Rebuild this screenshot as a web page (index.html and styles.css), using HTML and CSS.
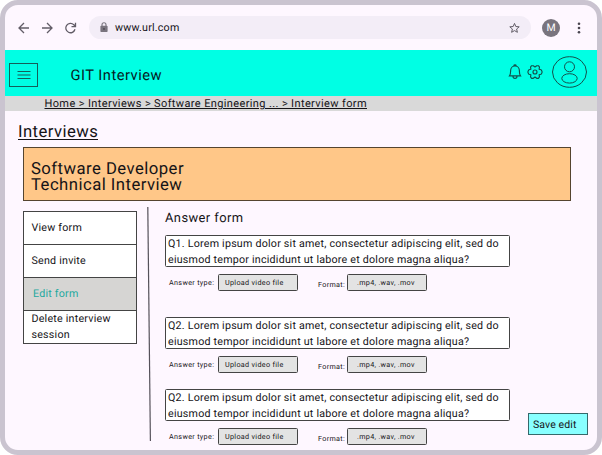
FILE: index.html
```html
<!DOCTYPE html>
<html lang="en">
<head>
<meta charset="utf-8">
<title>GIT Interview</title>
<link rel="stylesheet" href="styles.css">
</head>
<body>
<div class="window">
  <div class="toolbar">
    <svg class="nav" width="60" height="14" viewBox="0 0 60 14" fill="none" stroke="#625d67" stroke-width="1.3">
      <path d="M11 7H1.2M6 2L1 7l5 5"/>
      <path d="M24 7h9.8M29 2l5 5-5 5"/>
      <path d="M57 8.300A4.700 4.700 0 1 1 55.8 3.700L57.300 5.200M57.500 1.700v4h-4"/>
    </svg>
    <div class="address">
      <svg width="8" height="11" viewBox="0 0 8 11"><path d="M2 4V2.8a2 2 0 0 1 4 0V4" fill="none" stroke="#79747e" stroke-width="1.1"/><rect x=".4" y="3.8" width="7.2" height="6.2" rx=".8" fill="#79747e"/><circle cx="4" cy="6.9" r=".9" fill="#49454f"/></svg>
      <span class="url">www.url.com</span>
      <svg width="12" height="12" viewBox="0 0 12 12" fill="none" stroke="#625d67" stroke-width="1"><path d="M6.500 1.400l1.300 3.100 3.400.3-2.600 2.200.8 3.300-2.900-1.700-2.900 1.700.8-3.300-2.600-2.200 3.400-.3z"/></svg>
    </div>
    <div class="avatar">M</div>
    <svg class="dots" width="4" height="12" viewBox="0 0 4 12" fill="#49454f"><circle cx="2" cy="1.8" r="1.3"/><circle cx="2" cy="6" r="1.3"/><circle cx="2" cy="10.2" r="1.3"/></svg>
  </div>
  <header class="header">
    <div class="menu"><svg width="14" height="10" viewBox="0 0 14 10" stroke="#145f59" stroke-width="1.2"><path d="M.5 1.5h13M.5 5h13M.5 8.5h13"/></svg></div>
    <div class="brand">GIT Interview</div>
    <svg class="bell" width="14" height="16" viewBox="0 0 14 16" fill="none" stroke="#14504b" stroke-width="1.15"><path d="M1.500 11.800C2.700 10.200 2.600 9 2.600 6.800A4.400 5 0 0 1 11.400 6.800c0 2.200-.1 3.400 1.100 5zM5 12.200a2 2.100 0 0 0 4 0M5.900 1.800a1.100.9 0 0 1 2.200 0"/></svg>
    <svg class="gear" width="16" height="16" viewBox="0 0 16 16" fill="none" stroke="#14504b" stroke-width="1.15" stroke-linejoin="round"><path d="M4.600 1.700h1.700L8 3l1.700-1.300h1.700l1.100 1.500-.4 2 2 .6.900 1.500v1.400l-.9 1.500-2 .6.4 2-1.100 1.500H9.700L8 13l-1.700 1.300H4.600l-1.100-1.500.4-2-2-.6L1 8.700V7.300l.9-1.500 2-.6-.4-2z"/><circle cx="8" cy="8" r="2"/></svg>
    <svg class="profile" width="36" height="32" viewBox="0 0 36 32" fill="none" stroke="#14504b" stroke-width="1"><ellipse cx="17.500" cy="16" rx="17" ry="15.300"/><circle cx="17.500" cy="10.800" r="5"/><ellipse cx="17.500" cy="22.400" rx="7.700" ry="4.700"/></svg>
  </header>
  <nav class="crumbs"><span class="ul">Home &gt; Interviews &gt; Software Engineering ... &gt; Interview form</span></nav>
  <main>
    <h1 class="title"><span>Interviews</span></h1>
    <section class="banner">Software Developer<br>Technical Interview</section>
    <div class="columns">
      <ul class="side">
        <li>View form</li>
        <li>Send invite</li>
        <li class="active">Edit form</li>
        <li>Delete interview<br>session</li>
      </ul>
      <svg class="rule" width="5" height="234" viewBox="0 0 5 234"><path d="M.8 0L3.400 234" stroke="#55515a" stroke-width="1.200"/></svg>
      <section class="form">
        <h2>Answer form</h2>
        <div class="item first">
          <p>Q1. Lorem ipsum dolor sit amet, consectetur adipiscing elit, sed do<br>eiusmod tempor incididunt ut labore et dolore magna aliqua?</p>
          <div class="opts"><span class="label">Answer type:</span><span class="box">Upload video file</span><span class="label fmt">Format:</span><span class="box ext">.mp4, .wav, .mov</span></div>
        </div>
        <div class="item">
          <p>Q2. Lorem ipsum dolor sit amet, consectetur adipiscing elit, sed do<br>eiusmod tempor incididunt ut labore et dolore magna aliqua?</p>
          <div class="opts"><span class="label">Answer type:</span><span class="box">Upload video file</span><span class="label fmt">Format:</span><span class="box ext">.mp4, .wav, .mov</span></div>
        </div>
        <div class="item">
          <p>Q2. Lorem ipsum dolor sit amet, consectetur adipiscing elit, sed do<br>eiusmod tempor incididunt ut labore et dolore magna aliqua?</p>
          <div class="opts"><span class="label">Answer type:</span><span class="box">Upload video file</span><span class="label fmt">Format:</span><span class="box ext">.mp4, .wav, .mov</span></div>
        </div>
      </section>
      <button class="save">Save edit</button>
    </div>
  </main>
</div>
</body>
</html>
```
FILE: styles.css
```css
* { box-sizing: border-box; margin: 0; padding: 0; }
body { background: #fff; font-family: Roboto, "Liberation Sans", sans-serif; color: #151317; overflow: hidden; text-rendering: geometricPrecision; }
.window { width: 602px; height: 455px; border: 5px solid #cac4d0; border-radius: 18px; background: #fef7ff; overflow: hidden; }
.toolbar { height: 45px; display: flex; align-items: center; padding-left: 13px; }
.nav { margin-right: 11px; }
.address { width: 442px; height: 23px; border-radius: 12px; background: #f3edf7; display: flex; align-items: center; padding: 0 11px; }
.url { flex: 1; margin-left: 7px; font-size: 10.7px; letter-spacing: .2px; line-height: 14px; }
.avatar { width: 18px; height: 18px; border-radius: 50%; background: #79747e; color: #fff; font-size: 10.5px; line-height: 18.5px; text-align: center; margin-left: 11px; }
.dots { margin-left: 17px; }
.header { height: 46px; background: #00ffe4; display: flex; align-items: flex-start; padding-left: 4px; }
.menu { width: 29px; height: 24px; border: 1px solid #145f59; margin-top: 13px; display: flex; align-items: center; justify-content: center; }
.brand { width: 433px; margin: 16px 0 0 32.5px; font-size: 14.7px; line-height: 18px; letter-spacing: .48px; color: #06201e; }
.bell { margin: 14px 0 0 4px; }
.gear { margin: 14px 0 0 5.5px; }
.profile { margin: 6px 0 0 8.5px; }
.crumbs { height: 15px; background: #d9d9d9; padding-left: 39.5px; font-size: 11px; line-height: 15px; letter-spacing: .375px; white-space: nowrap; }
.ul { text-decoration: underline; text-underline-offset: 1px; text-decoration-thickness: 1px; }
.title { margin: 10px 0 0 13px; height: 22px; font-size: 16.7px; line-height: 22px; font-weight: 400; letter-spacing: .42px; }
.title span { border-bottom: 1px solid #151317; line-height: 23px; display: block; width: 80px; height: 19px; }
.banner { width: 548px; height: 54px; margin: 4px 0 0 18px; border: 1px solid #55452f; background: #ffc788; padding: 14px 0 0 7px; font-size: 16.7px; line-height: 16px; letter-spacing: .46px; }
.columns { display: flex; align-items: flex-start; padding-left: 18px; }
.side { width: 114px; margin-top: 10px; border: 1px solid #444; list-style: none; background: #fff; font-size: 10.7px; line-height: 16px; letter-spacing: .22px; }
.side li { height: 33px; padding-left: 7.5px; display: flex; align-items: center; border-bottom: 1px solid #444; white-space: nowrap; }
.side li:last-child { height: 32px; border-bottom: 0; }
.side .active { background: #d6d5d3; color: #1ea99f; padding-left: 9px; }
.rule { margin: 6px 0 0 10px; flex: none; }
.form { width: 345px; margin-left: 13px; }
.form h2 { margin-top: 9px; font-size: 12.9px; line-height: 18px; font-weight: 400; letter-spacing: .43px; }
.item { height: 72px; }
.item.first { height: 82px; margin-top: 7px; }
.item p { height: 32px; border: 1px solid #444; border-radius: 1.5px; background: #fff; padding-left: 2px; font-size: 10.7px; line-height: 15.7px; letter-spacing: .22px; white-space: nowrap; }
.opts { display: flex; margin-top: 7px; padding-left: 4px; font-size: 7.2px; line-height: 17px; white-space: nowrap; letter-spacing: .34px; }
.label { width: 49px; }
.box { width: 80px; height: 17px; border: 1px solid #444; border-radius: 1.5px; background: #e3e3e3; padding-left: 6px; line-height: 15.5px; letter-spacing: .32px; }
.fmt { width: 29px; margin-left: 20px; padding-top: 2px; }
.ext { padding-left: 9px; }
.save { margin: 212px 0 0 18px; width: 60px; height: 22px; background: #88ffff; border: 1px solid #35696b; font: 10.5px/20px Roboto, sans-serif; letter-spacing: .1px; color: #151317; text-align: left; padding-left: 4px; padding-top: 1px; text-rendering: geometricPrecision; }
```
